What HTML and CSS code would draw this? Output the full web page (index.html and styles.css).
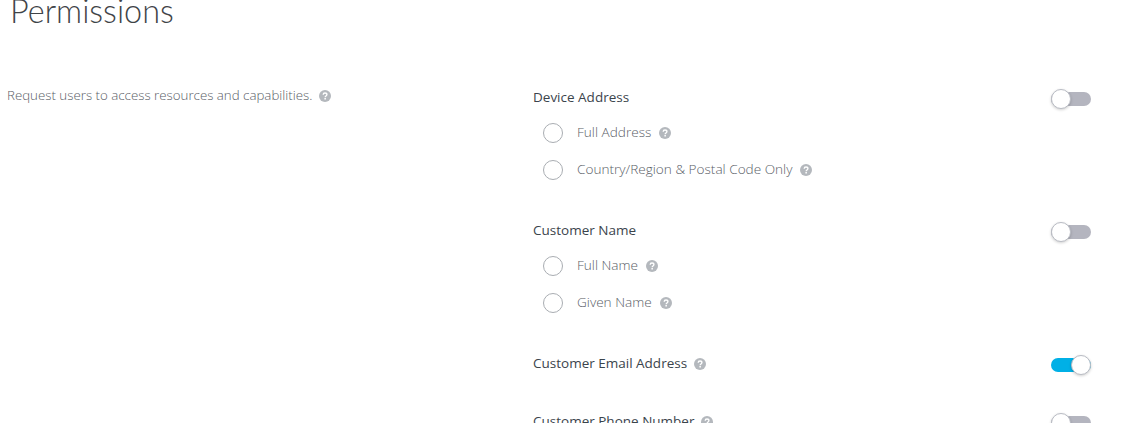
FILE: index.html
```html
<!DOCTYPE html>
<html lang="en">
<head>
  <meta charset="UTF-8">
  <title>Permissions</title>
  <link rel="stylesheet" href="styles.css">
</head>
<body>
  <svg class="defs" width="0" height="0">
    <symbol id="help" viewBox="0 0 12 12">
      <circle cx="6" cy="6" r="6" fill="#b4b8bd"/>
      <path d="M4.2 4.7C4.2 3.6 5 3 6 3s1.9.6 1.9 1.6c0 1.4-1.7 1.4-1.7 2.6" fill="none" stroke="#fff" stroke-width="1.4"/>
      <rect x="5.4" y="8" width="1.5" height="1.5" fill="#fff"/>
    </symbol>
  </svg>

  <h1 class="title">Permissions</h1>

  <section class="permissions">
    <p class="intro">Request users to access resources and capabilities. <svg class="help"><use href="#help"/></svg></p>

    <div class="list">
      <div class="group">
        <div class="row">
          <span class="name">Device Address</span>
          <span class="toggle"></span>
        </div>
        <div class="options">
          <div class="option"><span class="radio"></span>Full Address <svg class="help"><use href="#help"/></svg></div>
          <div class="option"><span class="radio"></span>Country/Region &amp; Postal Code Only <svg class="help"><use href="#help"/></svg></div>
        </div>
      </div>

      <div class="group">
        <div class="row">
          <span class="name">Customer Name</span>
          <span class="toggle"></span>
        </div>
        <div class="options">
          <div class="option"><span class="radio"></span>Full Name <svg class="help"><use href="#help"/></svg></div>
          <div class="option"><span class="radio"></span>Given Name <svg class="help"><use href="#help"/></svg></div>
        </div>
      </div>

      <div class="group single">
        <div class="row">
          <span class="name">Customer Email Address <svg class="help"><use href="#help"/></svg></span>
          <span class="toggle on"></span>
        </div>
      </div>

      <div class="group single">
        <div class="row">
          <span class="name">Customer Phone Number <svg class="help"><use href="#help"/></svg></span>
          <span class="toggle"></span>
        </div>
      </div>
    </div>
  </section>
</body>
</html>
```

FILE: styles.css
```css
html, body {
  height: 423px;
  overflow: hidden;
}
body {
  margin: 0;
  background: #fff;
  font-family: "Open Sans", sans-serif;
  font-size: 13.5px;
  color: #3f4a52;
}
.defs {
  display: block;
  height: 0;
}
.title {
  margin: 0 0 0 10px;
  font-family: Lato, sans-serif;
  font-size: 32.4px;
  line-height: 22px;
  font-weight: 300;
  color: #3f4448;
}
.permissions {
  display: flex;
  margin-top: 61px;
  padding-left: 7px;
  padding-right: 40px;
}
.intro {
  width: 526px;
  margin: 0;
  font-size: 13.3px;
  line-height: 24px;
  color: #5a6067;
  font-weight: 300;
}
.list {
  flex: 1;
  padding-top: 2px;
}
.group {
  margin-bottom: 30px;
}
.group.single {
  margin-bottom: 34px;
}
.row {
  display: flex;
  justify-content: space-between;
  align-items: center;
  height: 24px;
}
.name {
  color: #3b444c;
}
.options {
  margin-top: 5px;
}
.option {
  display: flex;
  align-items: center;
  box-sizing: border-box;
  height: 37px;
  padding: 0 0 2px 10px;
  font-size: 13.6px;
  color: #5a6067;
  font-weight: 300;
}
.radio {
  width: 18px;
  height: 18px;
  border: 1px solid #a9adb2;
  border-radius: 50%;
  margin: 2px 14px 0 0;
}
.help {
  width: 12px;
  height: 12px;
  vertical-align: -2px;
  margin-left: 3px;
}
.option .help {
  margin: 2px 0 0 8px;
}
.toggle {
  position: relative;
  width: 40px;
  height: 14px;
  margin-top: 4px;
  border-radius: 7px;
  background: #b4b5bf;
}
.toggle::after {
  content: "";
  position: absolute;
  top: -3px;
  left: 0;
  width: 18px;
  height: 18px;
  background: #fff;
  border: 1px solid #b9bcc4;
  border-radius: 50%;
  box-shadow: 0 1px 3px rgba(0, 0, 0, 0.2);
}
.toggle.on {
  background: #00b0e6;
}
.toggle.on::after {
  left: 20px;
}
```
